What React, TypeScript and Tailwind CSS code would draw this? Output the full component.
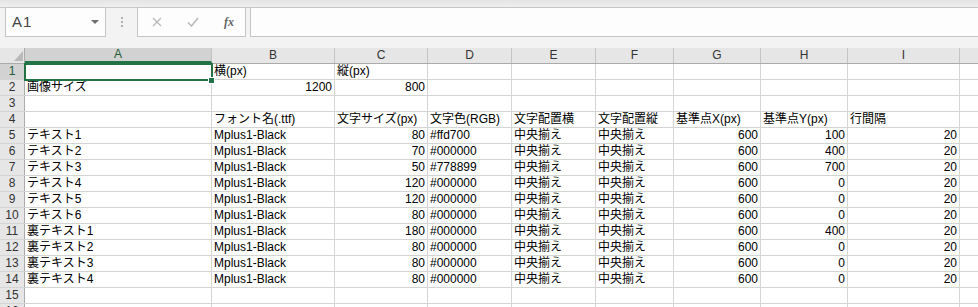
import React from 'react'

const cols = [
  { key: 'A', w: 187 },
  { key: 'B', w: 123 },
  { key: 'C', w: 93 },
  { key: 'D', w: 84 },
  { key: 'E', w: 84 },
  { key: 'F', w: 78 },
  { key: 'G', w: 87 },
  { key: 'H', w: 87 },
  { key: 'I', w: 112 },
  { key: 'J', w: 40 },
]

type Cell = string | { v: string; r: true }
const n = (v: string): Cell => ({ v, r: true })

const rows: Cell[][] = [
  ['', '横(px)', '縦(px)'],
  ['画像サイズ', n('1200'), n('800')],
  [],
  ['', 'フォント名(.ttf)', '文字サイズ(px)', '文字色(RGB)', '文字配置横', '文字配置縦', '基準点X(px)', '基準点Y(px)', '行間隔'],
  ['テキスト1', 'Mplus1-Black', n('80'), '#ffd700', '中央揃え', '中央揃え', n('600'), n('100'), n('20')],
  ['テキスト2', 'Mplus1-Black', n('70'), '#000000', '中央揃え', '中央揃え', n('600'), n('400'), n('20')],
  ['テキスト3', 'Mplus1-Black', n('50'), '#778899', '中央揃え', '中央揃え', n('600'), n('700'), n('20')],
  ['テキスト4', 'Mplus1-Black', n('120'), '#000000', '中央揃え', '中央揃え', n('600'), n('0'), n('20')],
  ['テキスト5', 'Mplus1-Black', n('120'), '#000000', '中央揃え', '中央揃え', n('600'), n('0'), n('20')],
  ['テキスト6', 'Mplus1-Black', n('80'), '#000000', '中央揃え', '中央揃え', n('600'), n('0'), n('20')],
  ['裏テキスト1', 'Mplus1-Black', n('180'), '#000000', '中央揃え', '中央揃え', n('600'), n('400'), n('20')],
  ['裏テキスト2', 'Mplus1-Black', n('80'), '#000000', '中央揃え', '中央揃え', n('600'), n('0'), n('20')],
  ['裏テキスト3', 'Mplus1-Black', n('80'), '#000000', '中央揃え', '中央揃え', n('600'), n('0'), n('20')],
  ['裏テキスト4', 'Mplus1-Black', n('80'), '#000000', '中央揃え', '中央揃え', n('600'), n('0'), n('20')],
  [],
  [],
]

const font = { fontFamily: '"Liberation Sans", "Noto Sans CJK JP", sans-serif' }

function FormulaBar() {
  return (
    <div className="h-[48px] bg-[#f3f3f3] flex flex-col">
      <div className="h-[8px] bg-gradient-to-b from-[#e4e4e4] to-[#efefef] border-b border-[#c8c8c8]" />
      <div className="flex h-[30px] -mt-px">
        <div className="ml-[5px] w-[101px] border border-[#c6c6c6] bg-[#fdfdfd] flex items-center justify-between pl-[6px] pr-[6px]">
          <span className="text-[15px] text-[#444] tracking-[1px]">A1</span>
          <svg width="8" height="5" viewBox="0 0 8 5"><path d="M0 0h8L4 4z" fill="#6d6d6d" /></svg>
        </div>
        <div className="w-[31px] flex flex-col items-center justify-center gap-[2px]">
          <span className="w-[2px] h-[2px] bg-[#b0b0b0]" />
          <span className="w-[2px] h-[2px] bg-[#b0b0b0]" />
          <span className="w-[2px] h-[2px] bg-[#b0b0b0]" />
        </div>
        <div className="w-[109px] border border-[#c6c6c6] bg-[#fdfdfd] flex items-center">
          <svg className="ml-[14px]" width="10" height="10" viewBox="0 0 10 10"><path d="M1 1l8 8M9 1l-8 8" stroke="#b9b9b9" strokeWidth="1.3" /></svg>
          <svg className="ml-[25px]" width="12" height="10" viewBox="0 0 12 10"><path d="M1 5.5l3.5 3.5L11 1" stroke="#b9b9b9" strokeWidth="1.5" fill="none" /></svg>
          <span className="ml-[25px] text-[12px] italic font-bold text-[#666]" style={{ fontFamily: '"Liberation Serif", serif' }}>fx</span>
        </div>
        <div className="ml-[4px] flex-1 border-y border-l border-[#c6c6c6] bg-[#fdfdfd]" />
      </div>
    </div>
  )
}

export default function App() {
  return (
    <div className="w-[978px] h-[307px] overflow-hidden bg-white text-black" style={font}>
      <FormulaBar />
      <div className="relative">
        <div className="flex h-[16px] bg-[#e6e6e6] border-b border-[#ababab]">
          <div className="w-[25px] shrink-0 border-r border-[#ababab] relative">
            <svg className="absolute left-[14px] top-[3px]" width="9" height="10" viewBox="0 0 9 10"><path d="M9 0V10H0z" fill="#b9b9b9" /></svg>
          </div>
          {cols.map((c, i) => (
            <div
              key={c.key}
              className={`shrink-0 border-r border-[#c4c4c4] flex items-center justify-center text-[12px] leading-[15px] ${i === 0 ? 'bg-[#d2d2d2] text-[#1f5a36] border-b-2 border-b-[#217346]' : 'text-[#333]'}`}
              style={{ width: c.w }}
            >
              {c.key === 'J' ? '' : c.key}
            </div>
          ))}
        </div>
        {rows.map((r, ri) => (
          <div key={ri} className="flex h-[16px] border-b border-[#d4d4d4]">
            <div className={`w-[25px] shrink-0 border-r border-[#ababab] flex items-center justify-center text-[12px] leading-[15px] ${ri === 0 ? 'bg-[#d2d2d2] text-[#1f5a36]' : 'bg-[#e6e6e6] text-[#333]'}`}>
              {ri + 1}
            </div>
            {cols.map((c, ci) => {
              const cell = r[ci]
              const right = typeof cell === 'object'
              const text = typeof cell === 'object' ? cell.v : cell ?? ''
              return (
                <div
                  key={c.key}
                  className={`shrink-0 border-r border-[#d4d4d4] flex items-end text-[12px] leading-[15px] whitespace-nowrap ${right ? 'justify-end pr-[2px]' : 'pl-[2px]'}`}
                  style={{ width: c.w }}
                >
                  {text}
                </div>
              )
            })}
          </div>
        ))}
        {/* active cell A1 */}
        <div className="absolute left-[24px] top-[15px] w-[189px] h-[18px] border-2 border-[#217346]" />
        <div className="absolute left-[208px] top-[29px] w-[7px] h-[7px] bg-[#217346] border border-white" />
      </div>
    </div>
  )
}
